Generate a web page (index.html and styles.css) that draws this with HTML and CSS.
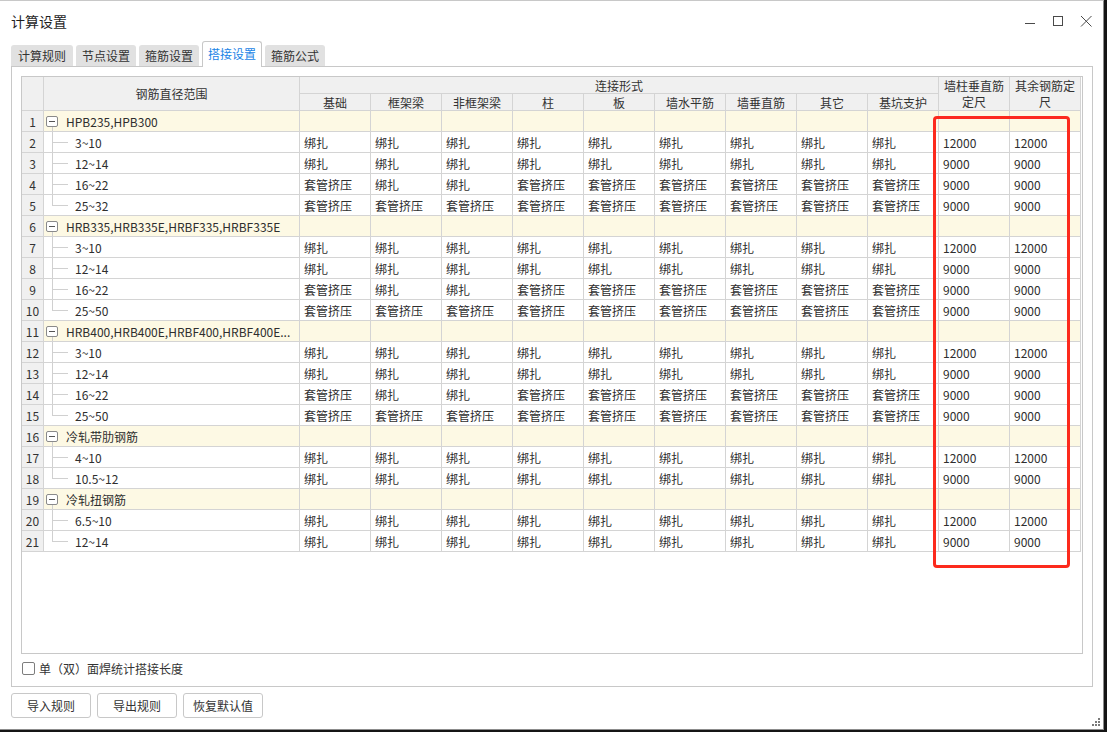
FILE: index.html
```html
<!DOCTYPE html>
<html lang="zh-CN">
<head>
<meta charset="utf-8">
<title>计算设置</title>
<link rel="stylesheet" href="styles.css">
</head>
<body>
<div class="window">
  <div class="titlebar">
    <span class="title">计算设置</span>
    <div class="controls">
      <svg width="12" height="12" viewBox="0 0 12 12"><path d="M1 8.5H11" stroke="#4a4a4a" stroke-width="1"/></svg>
      <svg width="12" height="12" viewBox="0 0 12 12"><rect x="1.5" y="1.5" width="9" height="9" fill="none" stroke="#4a4a4a" stroke-width="1"/></svg>
      <svg width="12" height="12" viewBox="0 0 12 12"><path d="M1 1L11.5 11.5M11.5 1L1 11.5" stroke="#4a4a4a" stroke-width="1"/></svg>
    </div>
  </div>
  <div class="tabs">
    <div class="tab t1">计算规则</div>
    <div class="tab">节点设置</div>
    <div class="tab">箍筋设置</div>
    <div class="tab active">搭接设置</div>
    <div class="tab">箍筋公式</div>
  </div>
  <div class="panel">
    <div class="grid">
      <div class="sheet">
        <div class="c h hcorner"></div>
        <div class="c h hname">钢筋直径范围</div>
        <div class="c h hgroup">连接形式</div>
        <div class="c h htall">墙柱垂直筋<br>定尺</div>
        <div class="c h htall">其余钢筋定<br>尺</div>
        <div class="c h">基础</div>
        <div class="c h">框架梁</div>
        <div class="c h">非框架梁</div>
        <div class="c h">柱</div>
        <div class="c h">板</div>
        <div class="c h">墙水平筋</div>
        <div class="c h">墙垂直筋</div>
        <div class="c h">其它</div>
        <div class="c h">基坑支护</div>

        <div class="c n">1</div><div class="c g nm"><span class="tog"></span>HPB235,HPB300</div><div class="c g"></div><div class="c g"></div><div class="c g"></div><div class="c g"></div><div class="c g"></div><div class="c g"></div><div class="c g"></div><div class="c g"></div><div class="c g"></div><div class="c g"></div><div class="c g"></div>

        <div class="c n">2</div><div class="c ch">3~10</div><div class="c">绑扎</div><div class="c">绑扎</div><div class="c">绑扎</div><div class="c">绑扎</div><div class="c">绑扎</div><div class="c">绑扎</div><div class="c">绑扎</div><div class="c">绑扎</div><div class="c">绑扎</div><div class="c">12000</div><div class="c">12000</div>

        <div class="c n">3</div><div class="c ch">12~14</div><div class="c">绑扎</div><div class="c">绑扎</div><div class="c">绑扎</div><div class="c">绑扎</div><div class="c">绑扎</div><div class="c">绑扎</div><div class="c">绑扎</div><div class="c">绑扎</div><div class="c">绑扎</div><div class="c">9000</div><div class="c">9000</div>

        <div class="c n">4</div><div class="c ch">16~22</div><div class="c">套管挤压</div><div class="c">绑扎</div><div class="c">绑扎</div><div class="c">套管挤压</div><div class="c">套管挤压</div><div class="c">套管挤压</div><div class="c">套管挤压</div><div class="c">套管挤压</div><div class="c">套管挤压</div><div class="c">9000</div><div class="c">9000</div>

        <div class="c n">5</div><div class="c ch last">25~32</div><div class="c">套管挤压</div><div class="c">套管挤压</div><div class="c">套管挤压</div><div class="c">套管挤压</div><div class="c">套管挤压</div><div class="c">套管挤压</div><div class="c">套管挤压</div><div class="c">套管挤压</div><div class="c">套管挤压</div><div class="c">9000</div><div class="c">9000</div>

        <div class="c n">6</div><div class="c g nm"><span class="tog"></span>HRB335,HRB335E,HRBF335,HRBF335E</div><div class="c g"></div><div class="c g"></div><div class="c g"></div><div class="c g"></div><div class="c g"></div><div class="c g"></div><div class="c g"></div><div class="c g"></div><div class="c g"></div><div class="c g"></div><div class="c g"></div>

        <div class="c n">7</div><div class="c ch">3~10</div><div class="c">绑扎</div><div class="c">绑扎</div><div class="c">绑扎</div><div class="c">绑扎</div><div class="c">绑扎</div><div class="c">绑扎</div><div class="c">绑扎</div><div class="c">绑扎</div><div class="c">绑扎</div><div class="c">12000</div><div class="c">12000</div>

        <div class="c n">8</div><div class="c ch">12~14</div><div class="c">绑扎</div><div class="c">绑扎</div><div class="c">绑扎</div><div class="c">绑扎</div><div class="c">绑扎</div><div class="c">绑扎</div><div class="c">绑扎</div><div class="c">绑扎</div><div class="c">绑扎</div><div class="c">9000</div><div class="c">9000</div>

        <div class="c n">9</div><div class="c ch">16~22</div><div class="c">套管挤压</div><div class="c">绑扎</div><div class="c">绑扎</div><div class="c">套管挤压</div><div class="c">套管挤压</div><div class="c">套管挤压</div><div class="c">套管挤压</div><div class="c">套管挤压</div><div class="c">套管挤压</div><div class="c">9000</div><div class="c">9000</div>

        <div class="c n">10</div><div class="c ch last">25~50</div><div class="c">套管挤压</div><div class="c">套管挤压</div><div class="c">套管挤压</div><div class="c">套管挤压</div><div class="c">套管挤压</div><div class="c">套管挤压</div><div class="c">套管挤压</div><div class="c">套管挤压</div><div class="c">套管挤压</div><div class="c">9000</div><div class="c">9000</div>

        <div class="c n">11</div><div class="c g nm"><span class="tog"></span>HRB400,HRB400E,HRBF400,HRBF400E...</div><div class="c g"></div><div class="c g"></div><div class="c g"></div><div class="c g"></div><div class="c g"></div><div class="c g"></div><div class="c g"></div><div class="c g"></div><div class="c g"></div><div class="c g"></div><div class="c g"></div>

        <div class="c n">12</div><div class="c ch">3~10</div><div class="c">绑扎</div><div class="c">绑扎</div><div class="c">绑扎</div><div class="c">绑扎</div><div class="c">绑扎</div><div class="c">绑扎</div><div class="c">绑扎</div><div class="c">绑扎</div><div class="c">绑扎</div><div class="c">12000</div><div class="c">12000</div>

        <div class="c n">13</div><div class="c ch">12~14</div><div class="c">绑扎</div><div class="c">绑扎</div><div class="c">绑扎</div><div class="c">绑扎</div><div class="c">绑扎</div><div class="c">绑扎</div><div class="c">绑扎</div><div class="c">绑扎</div><div class="c">绑扎</div><div class="c">9000</div><div class="c">9000</div>

        <div class="c n">14</div><div class="c ch">16~22</div><div class="c">套管挤压</div><div class="c">绑扎</div><div class="c">绑扎</div><div class="c">套管挤压</div><div class="c">套管挤压</div><div class="c">套管挤压</div><div class="c">套管挤压</div><div class="c">套管挤压</div><div class="c">套管挤压</div><div class="c">9000</div><div class="c">9000</div>

        <div class="c n">15</div><div class="c ch last">25~50</div><div class="c">套管挤压</div><div class="c">套管挤压</div><div class="c">套管挤压</div><div class="c">套管挤压</div><div class="c">套管挤压</div><div class="c">套管挤压</div><div class="c">套管挤压</div><div class="c">套管挤压</div><div class="c">套管挤压</div><div class="c">9000</div><div class="c">9000</div>

        <div class="c n">16</div><div class="c g nm"><span class="tog"></span>冷轧带肋钢筋</div><div class="c g"></div><div class="c g"></div><div class="c g"></div><div class="c g"></div><div class="c g"></div><div class="c g"></div><div class="c g"></div><div class="c g"></div><div class="c g"></div><div class="c g"></div><div class="c g"></div>

        <div class="c n">17</div><div class="c ch">4~10</div><div class="c">绑扎</div><div class="c">绑扎</div><div class="c">绑扎</div><div class="c">绑扎</div><div class="c">绑扎</div><div class="c">绑扎</div><div class="c">绑扎</div><div class="c">绑扎</div><div class="c">绑扎</div><div class="c">12000</div><div class="c">12000</div>

        <div class="c n">18</div><div class="c ch last">10.5~12</div><div class="c">绑扎</div><div class="c">绑扎</div><div class="c">绑扎</div><div class="c">绑扎</div><div class="c">绑扎</div><div class="c">绑扎</div><div class="c">绑扎</div><div class="c">绑扎</div><div class="c">绑扎</div><div class="c">9000</div><div class="c">9000</div>

        <div class="c n">19</div><div class="c g nm"><span class="tog"></span>冷轧扭钢筋</div><div class="c g"></div><div class="c g"></div><div class="c g"></div><div class="c g"></div><div class="c g"></div><div class="c g"></div><div class="c g"></div><div class="c g"></div><div class="c g"></div><div class="c g"></div><div class="c g"></div>

        <div class="c n">20</div><div class="c ch">6.5~10</div><div class="c">绑扎</div><div class="c">绑扎</div><div class="c">绑扎</div><div class="c">绑扎</div><div class="c">绑扎</div><div class="c">绑扎</div><div class="c">绑扎</div><div class="c">绑扎</div><div class="c">绑扎</div><div class="c">12000</div><div class="c">12000</div>

        <div class="c n">21</div><div class="c ch last">12~14</div><div class="c">绑扎</div><div class="c">绑扎</div><div class="c">绑扎</div><div class="c">绑扎</div><div class="c">绑扎</div><div class="c">绑扎</div><div class="c">绑扎</div><div class="c">绑扎</div><div class="c">绑扎</div><div class="c">9000</div><div class="c">9000</div>
      </div>
    </div>
    <label class="option"><span class="checkbox"></span><span>单（双）面焊统计搭接长度</span></label>
  </div>
  <div class="buttons">
    <button class="btn">导入规则</button>
    <button class="btn">导出规则</button>
    <button class="btn">恢复默认值</button>
  </div>
  <div class="highlight"></div>
  <svg class="grip" width="10" height="10" viewBox="0 0 10 10">
    <rect x="7" y="0" width="2" height="2" fill="#7a7a7a"/>
    <rect x="4" y="3" width="2" height="2" fill="#7a7a7a"/>
    <rect x="7" y="3" width="2" height="2" fill="#7a7a7a"/>
    <rect x="1" y="6" width="2" height="2" fill="#7a7a7a"/>
    <rect x="4" y="6" width="2" height="2" fill="#7a7a7a"/>
    <rect x="7" y="6" width="2" height="2" fill="#7a7a7a"/>
  </svg>
</div>
</body>
</html>
```

FILE: styles.css
```css
html, body {
  margin: 0;
  padding: 0;
}
body {
  width: 1107px;
  height: 732px;
  overflow: hidden;
  background: #151515;
  font-family: "Noto Sans CJK SC", "Microsoft YaHei", sans-serif;
  color: #333;
}
.window {
  position: relative;
  width: 1103px;
  height: 728px;
  background: #fff;
  border-top: 1px solid #c8c8c8;
  border-right: 1px solid #8c8c8c;
  border-bottom: 1px solid #8c8c8c;
  display: flex;
  flex-direction: column;
}
.titlebar {
  height: 40px;
  flex: none;
  display: flex;
  align-items: center;
  padding: 0 11px;
}
.title {
  font-size: 14px;
  color: #1f1f1f;
}
.controls {
  margin-left: auto;
  display: flex;
  align-items: center;
  gap: 16px;
}
.controls svg {
  display: block;
}
.tabs {
  height: 25px;
  flex: none;
  display: flex;
  align-items: flex-end;
  gap: 3px;
  padding-left: 11px;
}
.tab {
  box-sizing: border-box;
  width: 60px;
  height: 21px;
  background: #e1e1e1;
  border-radius: 3px 3px 0 0;
  font-size: 12px;
  line-height: 21px;
  text-align: center;
  color: #333;
}
.tab.t1 {
  width: 62px;
}
.tab.active {
  position: relative;
  z-index: 1;
  height: 26px;
  margin-bottom: -1px;
  background: #fff;
  border: 1px solid #c8c8c8;
  border-bottom: none;
  line-height: 24px;
  color: #1a84e6;
}
.panel {
  flex: none;
  width: 1062px;
  height: 610px;
  margin-left: 11px;
  border: 1px solid #c8c8c8;
  padding: 9px 9px 0;
}
.grid {
  box-sizing: border-box;
  width: 1062px;
  height: 578px;
  border: 1px solid #c8c8c8;
  overflow: hidden;
}
.sheet {
  display: grid;
  grid-template-columns: 22px 256px repeat(11, 71px);
  grid-template-rows: 17px 17px;
  grid-auto-rows: 21px;
  width: 1059px;
}
.c {
  box-sizing: border-box;
  border-right: 1px solid #d4d4d4;
  border-bottom: 1px solid #d4d4d4;
  padding: 0 4px;
  display: flex;
  align-items: center;
  font-size: 12px;
  white-space: nowrap;
  overflow: hidden;
  color: #2e2e2e;
}
.h {
  background: #f0f0f0;
  justify-content: center;
  color: #333;
}
.hcorner, .hname, .htall {
  grid-row: span 2;
}
.hgroup {
  grid-column: span 9;
}
.htall {
  white-space: normal;
  text-align: center;
  line-height: 16px;
}
.n {
  background: #f0f0f0;
  justify-content: center;
  padding: 0;
  color: #333;
}
.g {
  background: #fdf9e4;
}
.nm {
  position: relative;
  padding-left: 2px;
}
.nm::after {
  content: "";
  position: absolute;
  left: 8px;
  top: 16px;
  bottom: -1px;
  width: 1px;
  background: #d0d0d0;
}
.tog {
  box-sizing: border-box;
  position: relative;
  width: 12px;
  height: 11px;
  margin-right: 8px;
  border: 1px solid #8a8a8a;
  border-radius: 2px;
  background: #fff;
  flex: none;
}
.tog::before {
  content: "";
  position: absolute;
  left: 2px;
  right: 2px;
  top: 4px;
  height: 1px;
  background: #555;
}
.ch {
  position: relative;
  padding-left: 31px;
}
.ch::before {
  content: "";
  position: absolute;
  left: 8px;
  top: -1px;
  bottom: -1px;
  width: 1px;
  background: #d0d0d0;
}
.ch.last::before {
  bottom: auto;
  height: 11px;
}
.ch::after {
  content: "";
  position: absolute;
  left: 8px;
  top: 10px;
  width: 16px;
  height: 1px;
  background: #d0d0d0;
}
.option {
  height: 32px;
  box-sizing: border-box;
  padding-bottom: 4px;
  display: flex;
  align-items: center;
  font-size: 12px;
  color: #333;
}
.checkbox {
  box-sizing: border-box;
  width: 13px;
  height: 13px;
  margin-left: 1px;
  margin-right: 4px;
  border: 1px solid #7d7d7d;
  border-radius: 2px;
  background: #fff;
}
.buttons {
  flex: none;
  display: flex;
  gap: 6px;
  padding-left: 11px;
  margin-top: 6px;
}
.btn {
  box-sizing: border-box;
  width: 80px;
  height: 25px;
  border: 1px solid #c8c8c8;
  border-radius: 3px;
  background: #fff;
  font-family: "Noto Sans CJK SC", "Microsoft YaHei", sans-serif;
  font-size: 12px;
  color: #333;
  padding: 0;
}
.highlight {
  position: absolute;
  left: 933px;
  top: 115px;
  width: 137px;
  height: 452px;
  box-sizing: border-box;
  border: 3px solid #fc2a1d;
  border-radius: 4px;
}
.grip {
  position: absolute;
  right: 2px;
  bottom: 1px;
}
```
